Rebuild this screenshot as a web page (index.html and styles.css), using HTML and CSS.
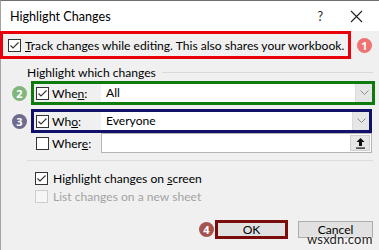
FILE: index.html
```html
<!DOCTYPE html>
<html>
<head>
<meta charset="utf-8">
<link rel="stylesheet" href="styles.css">
</head>
<body>
<div class="dialog">
  <div class="titlebar">
    <span class="title">Highlight Changes</span>
    <span class="help">?</span>
    <svg class="close" width="13" height="13" viewBox="0 0 13 13"><path d="M1 1 L12 12 M12 1 L1 12" stroke="#222" stroke-width="1.1" fill="none"/></svg>
  </div>

  <div class="track-row">
    <div class="hl hl-red track-box">
      <span class="cb"><svg width="11" height="11" viewBox="0 0 11 11"><path d="M1.5 5.5 L4 8 L9.5 2.5" stroke="#333" stroke-width="1.1" fill="none"/></svg></span>
      <span class="track-text"><u>T</u>rack changes while editing. This also shares your workbook.</span>
    </div>
    <span class="badge b1">1</span>
  </div>

  <div class="group-label"><span>Highlight which changes</span><span class="line"></span></div>

  <div class="opt-row">
    <span class="badge b2">2</span>
    <div class="hl hl-green box-green">
      <span class="cb"><svg width="11" height="11" viewBox="0 0 11 11"><path d="M1.5 5.5 L4 8 L9.5 2.5" stroke="#333" stroke-width="1.1" fill="none"/></svg></span>
      <span class="lbl">Whe<u>n</u>:</span>
      <div class="combo"><span class="val">All</span><span class="drop"><svg width="9" height="6" viewBox="0 0 9 6"><path d="M0.5 0.5 L4.5 4.5 L8.5 0.5" stroke="#8a8a8a" stroke-width="1" fill="none"/></svg></span></div>
    </div>
  </div>

  <div class="opt-row row-blue">
    <span class="badge b3">3</span>
    <div class="hl hl-blue box-blue">
      <span class="cb"><svg width="11" height="11" viewBox="0 0 11 11"><path d="M1.5 5.5 L4 8 L9.5 2.5" stroke="#333" stroke-width="1.1" fill="none"/></svg></span>
      <span class="lbl">Wh<u>o</u>:</span>
      <div class="combo"><span class="val">Everyone</span><span class="drop"><svg width="9" height="6" viewBox="0 0 9 6"><path d="M0.5 0.5 L4.5 4.5 L8.5 0.5" stroke="#8a8a8a" stroke-width="1" fill="none"/></svg></span></div>
    </div>
  </div>

  <div class="where-row">
    <span class="cb"></span>
    <span class="lbl">Wher<u>e</u>:</span>
    <div class="ref-input"><span class="val"></span><span class="ref-btn"><svg width="11" height="12" viewBox="0 0 11 12"><path d="M5.5 1 L1.5 5 L4 5 L4 9 L7 9 L7 5 L9.5 5 Z" fill="#111"/><rect x="1" y="10.5" width="9" height="1.2" fill="#111"/></svg></span></div>
  </div>

  <div class="sep"></div>

  <div class="check-row">
    <span class="cb"><svg width="11" height="11" viewBox="0 0 11 11"><path d="M1.5 5.5 L4 8 L9.5 2.5" stroke="#333" stroke-width="1.1" fill="none"/></svg></span>
    <span>Highlight changes on <u>s</u>creen</span>
  </div>
  <div class="check-row disabled">
    <span class="cb"></span>
    <span>List changes on a new sheet</span>
  </div>

  <div class="btn-row">
    <span class="badge b4">4</span>
    <div class="hl hl-dred ok-box"><span class="btn ok">OK</span></div>
    <span class="btn cancel">Cancel</span>
  </div>

  <span class="watermark">wsxdn.com</span>
</div>
</body>
</html>
```

FILE: styles.css
```css
* { box-sizing: border-box; }
html, body { margin: 0; padding: 0; }
body {
  width: 379px;
  height: 250px;
  overflow: hidden;
  font-family: "Lato", "Noto Sans", sans-serif;
  font-size: 12.1px;
  color: #000;
  background: #f0f0f0;
}
u { text-decoration: underline; text-underline-offset: 1px; }

.dialog {
  position: relative;
  width: 379px;
  height: 250px;
  background: #f0f0f0;
  border-top: 1px solid #6f6f6f;
  border-left: 1px solid #a3a3a3;
}

.titlebar {
  height: 30px;
  background: #fff;
  display: flex;
  align-items: center;
  padding-left: 9px;
}
.title { font-size: 12.6px; flex: 1; }
.help { font-size: 12.5px; color: #222; margin-right: 27px; }
.close { margin-right: 16px; }

.hl { display: flex; align-items: center; border-style: solid; border-width: 3px; }
.hl-red { border-color: #e8000b; }
.hl-green { border-color: #0f7b0f; }
.hl-blue { border-color: #11116b; }
.hl-dred { border-color: #7a0c0c; }

.track-row {
  display: flex;
  align-items: center;
  margin-left: -1px;
}
.track-box {
  width: 351px;
  height: 28px;
  padding-left: 5px;
}
.track-text { margin-left: 4px; white-space: nowrap; }

.cb {
  width: 13px;
  height: 13px;
  flex: none;
  border: 1px solid #333;
  background: #fff;
  display: flex;
  align-items: center;
  justify-content: center;
}

.badge {
  width: 15px;
  height: 15px;
  flex: none;
  border-radius: 50%;
  color: #fff;
  font-family: "Noto Sans", sans-serif;
  font-weight: bold;
  font-size: 11px;
  line-height: 15px;
  text-align: center;
}
.b1 { background: #ee7372; margin-left: 6px; }
.b2 { background: #80b67e; }
.b3 { background: #6e6d90; }
.b4 { background: #a4534f; }

.group-label {
  display: flex;
  align-items: center;
  height: 16px;
  margin-top: 5px;
  padding-left: 26px;
  padding-right: 6px;
  color: #000;
}
.group-label .line { flex: 1; height: 1px; background: #d9d9d9; margin-left: 6px; }

.opt-row {
  display: flex;
  align-items: center;
  margin-top: 1px;
  padding-left: 11px;
}
.opt-row .hl { margin-left: 4px; height: 24px; padding-left: 2px; }
.row-blue { margin-top: 4px; }
.box-green { width: 344px; }
.box-blue { width: 341px; }

.lbl { width: 49px; margin-left: 3px; white-space: nowrap; }

.combo, .ref-input {
  flex: 1;
  height: 18px;
  display: flex;
  align-items: stretch;
  background: #fff;
}
.val { flex: 1; padding-left: 5px; line-height: 18px; }
.drop {
  width: 17px;
  background: #e6e6e6;
  border-left: 1px solid #dcdcdc;
  display: flex;
  align-items: center;
  justify-content: center;
}

.where-row {
  display: flex;
  align-items: center;
  height: 20px;
  padding-left: 35px;
  padding-right: 7px;
}
.ref-input { height: 20px; border: 1px solid #b4b4b4; }
.ref-btn {
  width: 20px;
  margin: 1px;
  background: #e6e6e6;
  border: 1px solid #cfcfcf;
  display: flex;
  align-items: center;
  justify-content: center;
}

.sep { height: 1px; background: #dcdcdc; margin: 7px 6px 0 26px; }

.check-row {
  display: flex;
  align-items: center;
  height: 16px;
  padding-left: 34px;
  margin-top: 9px;
  gap: 5px;
}
.check-row + .check-row { margin-top: 2px; }
.check-row.disabled { color: #a3a3a3; }
.check-row.disabled .cb { border-color: #cdcdcd; background: #f6f6f6; }

.btn-row {
  display: flex;
  align-items: center;
  justify-content: flex-end;
  margin-top: 16px;
  padding-right: 6px;
}
.ok-box { width: 73px; height: 19px; margin-left: 1px; }
.btn {
  display: flex;
  align-items: center;
  justify-content: center;
  background: #e1e1e1;
}
.ok { flex: 1; align-self: stretch; }
.cancel {
  width: 75px;
  height: 17px;
  margin-left: 10px;
  border: 1px solid #adadad;
}

.watermark {
  position: absolute;
  left: 306px;
  top: 230px;
  font-size: 13px;
  color: #222;
  letter-spacing: 0.2px;
  text-shadow: 0 0 2px #fff, 0 0 2px #fff;
}
```
